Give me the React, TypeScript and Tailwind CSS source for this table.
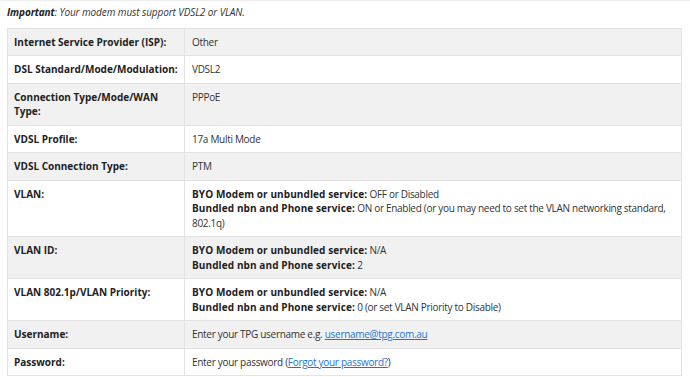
import React from "react";

type Row = {
  label: React.ReactNode;
  value: React.ReactNode;
};

const B = ({ children }: { children: React.ReactNode }) => (
  <strong className="font-bold text-[#222] tracking-[0.1px]">{children}</strong>
);

const rows: Row[] = [
  { label: "Internet Service Provider (ISP):", value: "Other" },
  { label: "DSL Standard/Mode/Modulation:", value: "VDSL2" },
  {
    label: (
      <>
        Connection Type/Mode/WAN
        <br />
        Type:
      </>
    ),
    value: "PPPoE",
  },
  { label: "VDSL Profile:", value: "17a Multi Mode" },
  { label: "VDSL Connection Type:", value: "PTM" },
  {
    label: "VLAN:",
    value: (
      <>
        <B>BYO Modem or unbundled service:</B> OFF or Disabled
        <br />
        <B>Bundled nbn and Phone service:</B> ON or Enabled (or you may need to set the VLAN
        networking standard, 802.1q)
      </>
    ),
  },
  {
    label: "VLAN ID:",
    value: (
      <>
        <B>BYO Modem or unbundled service:</B> N/A
        <br />
        <B>Bundled nbn and Phone service:</B> 2
      </>
    ),
  },
  {
    label: "VLAN 802.1p/VLAN Priority:",
    value: (
      <>
        <B>BYO Modem or unbundled service:</B> N/A
        <br />
        <B>Bundled nbn and Phone service:</B> 0 (or set VLAN Priority to Disable)
      </>
    ),
  },
  {
    label: "Username:",
    value: (
      <>
        Enter your TPG username e.g.{" "}
        <a href="#" className="text-[#1f74cc] underline">
          username@tpg.com.au
        </a>
      </>
    ),
  },
  {
    label: "Password:",
    value: (
      <>
        Enter your password (
        <a href="#" className="text-[#1f74cc] underline">
          Forgot your password?
        </a>
        )
      </>
    ),
  },
];

export default function App() {
  return (
    <div
      className="w-[690px] h-[377px] overflow-hidden bg-white border-t border-[#eeeeee] text-[10px] leading-[14.5px] text-[#333]"
      style={{ fontFamily: '"Open Sans", "Noto Sans", sans-serif' }}
    >
      <p className="px-[7px] pt-[4px] pb-[8px] italic tracking-[-0.1px]">
        <strong className="font-bold text-[#222]">Important</strong>: Your modem must support VDSL2 or
        VLAN.
      </p>

      <table className="ml-[7px] w-[675px] table-fixed border-collapse border border-[#e3e3e3]">
        <colgroup>
          <col className="w-[177px]" />
          <col />
        </colgroup>
        <tbody>
          {rows.map((row, i) => (
            <tr key={i} className={i % 2 === 0 ? "bg-[#f1f1f1]" : "bg-white"}>
              <td className="align-top whitespace-nowrap border-b border-r border-[#e3e3e3] px-[6px] py-[6px] font-bold text-[#222]">
                {row.label}
              </td>
              <td className="align-top border-b border-[#e3e3e3] px-[7px] py-[6px] tracking-[-0.3px]">
                {row.value}
              </td>
            </tr>
          ))}
        </tbody>
      </table>
    </div>
  );
}
